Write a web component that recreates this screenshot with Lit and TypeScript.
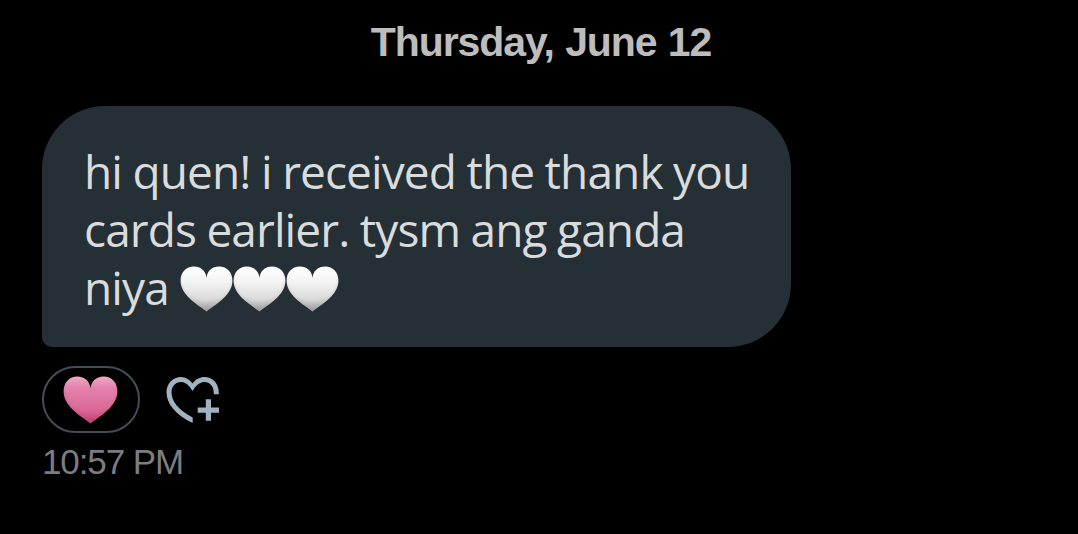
import { LitElement, html, css, svg } from "lit";
import { customElement, property } from "lit/decorators.js";

const HEART =
  "M27 47.5C22 42.5 1.2 32.5 .6 16C.3 6.5 6.5 .6 14 .6C21.5 .6 26.4 5.5 27 12.6C27.6 5.5 32.5 .6 40 .6C47.5 .6 53.7 6.5 53.4 16C52.8 32.5 32 42.5 27 47.5Z";

@customElement("emoji-heart")
class EmojiHeart extends LitElement {
  @property() tone: "white" | "pink" = "white";

  static styles = css`
    :host { display: block; }
    svg { display: block; width: 100%; height: 100%; }
  `;

  render() {
    const white = this.tone === "white";
    const stops = white
      ? [["0", "#ffffff"], [".35", "#f3f3f3"], [".7", "#dcdcdc"], ["1", "#b4b4b4"]]
      : [["0", "#f0a9c4"], [".25", "#e281ab"], [".65", "#dc6c9a"], ["1", "#d04c80"]];
    const edge = white ? "#777777" : "#a52d59";
    return html`<svg viewBox="0 0 54 48" preserveAspectRatio="none" aria-hidden="true">
      <defs>
        <linearGradient id="body" x1="0" y1="0" x2="0" y2="1">
          ${stops.map(([o, c]) => svg`<stop offset=${o} stop-color=${c}></stop>`)}
        </linearGradient>
        <radialGradient id="rim" gradientUnits="userSpaceOnUse" cx="27" cy="12" r="37">
          <stop offset=".65" stop-color=${edge} stop-opacity="0"></stop>
          <stop offset="1" stop-color=${edge} stop-opacity=".5"></stop>
        </radialGradient>
      </defs>
      <path d=${HEART} fill="url(#body)"></path>
      <path d=${HEART} fill="url(#rim)"></path>
    </svg>`;
  }
}

@customElement("app-root")
class AppRoot extends LitElement {
  static styles = css`
    :host {
      display: block;
      box-sizing: border-box;
      height: 534px;
      padding: 14px 42px 0;
      overflow: hidden;
      background: #000;
      font-family: "Open Sans", "Noto Sans", sans-serif;
    }
    .date {
      margin: 0 0 36px 4px;
      text-align: center;
      font-family: "Liberation Sans", Arial, sans-serif;
      font-size: 41px;
      font-weight: 700;
      line-height: 56px;
      letter-spacing: -1.1px;
      word-spacing: 1px;
      color: #bdbdbd;
    }
    .bubble {
      box-sizing: border-box;
      width: 749px;
      height: 241px;
      padding: 36px 42px 0;
      border-radius: 63px 63px 63px 10px;
      background: #252f36;
      color: #d9dbdc;
      font-size: 46px;
      line-height: 58px;
      letter-spacing: -0.9px;
      word-spacing: -0.6px;
    }
    .line { display: flex; white-space: pre; height: 58px; }
    .hearts { display: flex; padding: 8px 0 0 11px; }
    .hearts emoji-heart { width: 53px; height: 46px; }
    .reactions { display: flex; align-items: center; gap: 26px; margin-top: 19px; }
    .pill {
      box-sizing: border-box;
      width: 98px;
      height: 67px;
      border: 2px solid #434d56;
      border-radius: 34px;
      display: flex;
      justify-content: center;
      padding: 8px 1px 0 0;
    }
    .pill emoji-heart { width: 55px; height: 48px; }
    .add { display: block; width: 54px; height: 48px; fill: #9fb3c3; }
    .time {
      margin-top: 5px;
      font-family: "Liberation Sans", Arial, sans-serif;
      font-size: 35px;
      line-height: 48px;
      letter-spacing: -1.1px;
      color: #7b7d80;
    }
  `;

  render() {
    return html`
      <div class="date"><span>Thursday, June 12</span></div>
      <div class="bubble">
        <div class="line"><span>hi quen! i received the thank you</span></div>
        <div class="line"><span>cards earlier. tysm ang ganda</span></div>
        <div class="line">
          <span>niya</span><span class="hearts"><emoji-heart></emoji-heart><emoji-heart></emoji-heart><emoji-heart></emoji-heart></span>
        </div>
      </div>
      <div class="reactions">
        <div class="pill"><emoji-heart tone="pink"></emoji-heart></div>
        <svg class="add" viewBox="0 0 54 48" aria-label="Add reaction">
          <path d="M26.5 7.5C29.5 3.3 34 1 38.5 1C46.5 1 52.8 7.5 52.8 16.3V18.3H47.7V16.3C47.7 10.3 43.8 6 38.5 6C34.5 6 30.5 8.5 26.5 15C22.5 8.5 19 6 15 6C9.5 6 5.5 10.3 5.5 16.3C5.5 25 12 34 26.7 41.5V47C9 38.5 .5 27.5 .5 16.3C.5 7.5 7 1 15 1C19.5 1 23.5 3.3 26.5 7.5Z"></path>
          <path d="M39.8 23.3H45V31.5H53V36.7H45V44.7H39.8V36.7H31.7V31.5H39.8Z"></path>
        </svg>
      </div>
      <div class="time"><span>10:57 PM</span></div>
    `;
  }
}
